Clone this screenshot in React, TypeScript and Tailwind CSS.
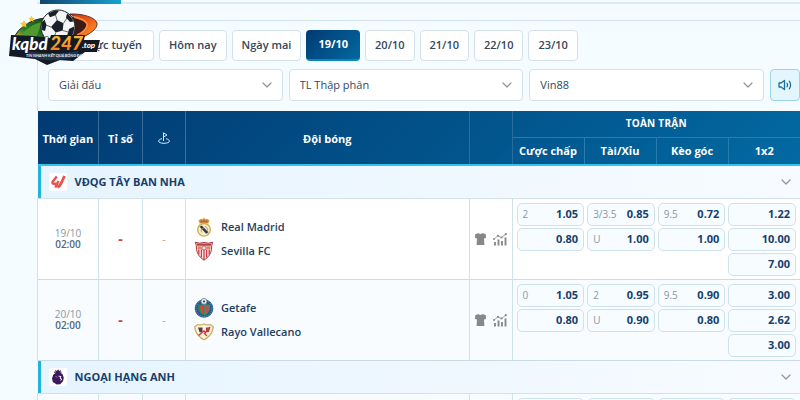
import { ChevronDown } from "lucide-react";

const days = ["Hôm nay", "Ngày mai", "19/10", "20/10", "21/10", "22/10", "23/10"];

const filters = [
  { id: "league", label: "Giải đấu" },
  { id: "odds-type", label: "TL Thập phân" },
  { id: "bookmaker", label: "Vin88" },
];

type Odd = { line?: string; value: string };

type Match = {
  date: string;
  time: string;
  home: string;
  away: string;
  HomeCrest: () => React.ReactNode;
  AwayCrest: () => React.ReactNode;
  // one column per market: handicap, over/under, corners, 1x2
  odds: Odd[][];
};

const laLiga: Match[] = [
  {
    date: "19/10",
    time: "02:00",
    home: "Real Madrid",
    away: "Sevilla FC",
    HomeCrest: RealMadridCrest,
    AwayCrest: SevillaCrest,
    odds: [
      [{ line: "2", value: "1.05" }, { value: "0.80" }],
      [{ line: "3/3.5", value: "0.85" }, { line: "U", value: "1.00" }],
      [{ line: "9.5", value: "0.72" }, { value: "1.00" }],
      [{ value: "1.22" }, { value: "10.00" }, { value: "7.00" }],
    ],
  },
  {
    date: "20/10",
    time: "02:00",
    home: "Getafe",
    away: "Rayo Vallecano",
    HomeCrest: GetafeCrest,
    AwayCrest: RayoCrest,
    odds: [
      [{ line: "0", value: "1.05" }, { value: "0.80" }],
      [{ line: "2", value: "0.95" }, { line: "U", value: "0.90" }],
      [{ line: "9.5", value: "0.90" }, { value: "0.80" }],
      [{ value: "3.00" }, { value: "2.62" }, { value: "3.00" }],
    ],
  },
];

export default function App() {
  return (
    <div className="h-screen overflow-hidden bg-[#f4fcff] font-['Open_Sans','Noto_Sans',sans-serif] text-[11px] text-[#33475b]">
      <SiteLogo />
      <main className="pl-[37px]">
        <div className="h-1 border-b-2 border-[#dde9f0]">
          <div className="ml-[3px] h-1 w-[81px] bg-linear-to-r from-[#11466f] to-[#16a3d3]" />
        </div>
        <Filters />
        <OddsTable />
      </main>
    </div>
  );
}

function Filters() {
  return (
    <section className="mt-4 flex flex-col gap-2 border-t border-l border-[#d3e1ea] pt-[9px] pb-[10px] pl-[10px]">
      <div className="flex gap-[5px]">
        <button className="h-[31px] w-[106px] rounded border border-[#d5e1ea] bg-white pr-[11px] text-right font-semibold">
          Trực tuyến
        </button>
        {days.map((day) => (
          <button
            key={day}
            className={
              day === "19/10"
                ? "h-[31px] rounded border-b-2 border-[#0a86b8] bg-linear-135 from-[#023a72] to-[#0369a1] px-3 font-bold text-white"
                : "h-[31px] rounded border border-[#d5e1ea] bg-white px-[9px] font-semibold"
            }
          >
            {day}
          </button>
        ))}
      </div>
      <div className="flex gap-[6px]">
        {filters.map((f) => (
          <div key={f.id} className="relative flex-1">
            <select
              id={f.id}
              aria-label={f.label}
              className="h-8 w-full appearance-none rounded border border-[#d5e1ea] bg-white pl-[10px] font-medium"
            >
              <option>{f.label}</option>
            </select>
            <ChevronDown className="pointer-events-none absolute top-2 right-2 size-4 text-[#8b959c]" strokeWidth={1.8} />
          </div>
        ))}
        <button
          aria-label="Âm thanh"
          className="flex h-8 w-[30px] items-center justify-center rounded border border-[#9bd3e8] bg-[#e3f6fe]"
        >
          <SoundIcon />
        </button>
      </div>
    </section>
  );
}

function OddsTable() {
  return (
    <table className="w-full table-fixed border-collapse">
      <colgroup>
        <col className="w-[61px]" />
        <col className="w-11" />
        <col className="w-[43px]" />
        <col />
        <col className="w-[43px]" />
        <col className="w-[72px]" />
        <col className="w-[72px]" />
        <col className="w-[72px]" />
        <col className="w-[72px]" />
      </colgroup>
      <thead className="border-b-2 border-[#35c3ea] bg-linear-135 from-[#023a72] to-[#0369a1] text-white">
        <tr className="h-[26px]">
          <th rowSpan={2} className="border-r border-[#3c6c98] pt-1">Thời gian</th>
          <th rowSpan={2} className="border-r border-[#3c6c98] pt-1">Tỉ số</th>
          <th rowSpan={2} className="border-r border-[#3c6c98]">
            <CornerIcon />
          </th>
          <th rowSpan={2} className="border-r border-[#2b6d9f] pt-1">Đội bóng</th>
          <th rowSpan={2} className="border-r border-[#2b6d9f]" />
          <th colSpan={4} className="border-b border-[#2b7cae] text-[10px] tracking-wide">TOÀN TRẬN</th>
        </tr>
        <tr className="h-7">
          <th className="border-r border-[#2b7cae]">Cược chấp</th>
          <th className="border-r border-[#2b7cae]">Tài/Xỉu</th>
          <th className="border-r border-[#2b7cae]">Kèo góc</th>
          <th>1x2</th>
        </tr>
      </thead>
      <tbody>
        <LeagueRow name="VĐQG TÂY BAN NHA" logo={<LaLigaLogo />} />
        {laLiga.map((m) => (
          <MatchRow key={m.home} match={m} />
        ))}
        <LeagueRow name="NGOẠI HẠNG ANH" logo={<PremierLeagueLogo />} />
        <MatchRow match={laLiga[0]} />
      </tbody>
    </table>
  );
}

function LeagueRow({ name, logo }: { name: string; logo: React.ReactNode }) {
  return (
    <tr>
      <td colSpan={9} className="border-b border-[#d3e1ea] p-0">
        <div className="flex h-8 items-center border-l-3 border-[#22b4d8] bg-linear-to-r from-[#e6f4ff] to-[#f7fbff] pr-[6px] pl-2">
          <span className="flex size-[18px] items-center justify-center rounded-xs bg-white">{logo}</span>
          <h2 className="ml-2 flex-1 font-bold text-[#173f6b]">{name}</h2>
          <button aria-label={name}>
            <ChevronDown className="size-4 text-[#8b959c]" strokeWidth={1.8} />
          </button>
        </div>
      </td>
    </tr>
  );
}

function MatchRow({ match }: { match: Match }) {
  const { HomeCrest, AwayCrest } = match;
  return (
    <tr className="border-b border-[#c9dce6] even:bg-white odd:bg-[#f8fcff]">
      <td className="border-x border-[#d0e2ea] text-center text-[10px] leading-[11px]">
        <div className="text-[#8b979f]">{match.date}</div>
        <div className="font-semibold text-[#52667a]">{match.time}</div>
      </td>
      <td className="border-r border-[#d0e2ea] text-center text-sm font-bold text-[#d63a4c]">-</td>
      <td className="border-r border-[#d0e2ea] text-center text-[#d98e8e]">-</td>
      <td className="border-r border-[#d0e2ea] pl-2">
        <div className="flex flex-col gap-1 font-semibold text-[#1f3f60]">
          <div className="flex h-5 items-center gap-[7px]">
            <HomeCrest />
            {match.home}
          </div>
          <div className="flex h-5 items-center gap-[7px]">
            <AwayCrest />
            {match.away}
          </div>
        </div>
      </td>
      <td className="border-r border-[#d0e2ea]">
        <div className="flex items-center justify-center gap-[7px] text-[#85898c]">
          <ShirtIcon />
          <StatsIcon />
        </div>
      </td>
      <td colSpan={4} className="px-1 pt-1 pb-[3px] align-top">
        <div className="grid grid-cols-4 gap-[3px]">
          {match.odds.map((market, i) => (
            <div key={i} className="flex flex-col gap-[2px]">
              {market.map((odd, j) => (
                <button
                  key={j}
                  className="flex h-[23px] items-center justify-between rounded-[5px] border border-[#cfe2ec] bg-[#f6fcff] pr-[5px] pl-[5px]"
                >
                  <span className="text-[10px] text-[#8b979f]">{odd.line}</span>
                  <span className="font-bold text-[#173f6b]">{odd.value}</span>
                </button>
              ))}
            </div>
          ))}
        </div>
      </td>
    </tr>
  );
}

function SoundIcon() {
  return (
    <svg viewBox="0 0 14 12" className="h-3 w-[14px]" fill="none" stroke="#1c6f96" strokeWidth="1.300" strokeLinejoin="round" strokeLinecap="round">
      <path d="M1 4v4h2l3.500 2.500v-9L3 4z" />
      <path d="M9 4.200c.7 1 .7 2.600 0 3.600M11.300 2.200c1.700 2 1.700 5.600 0 7.600" />
    </svg>
  );
}

function CornerIcon() {
  return (
    <svg viewBox="0 0 12 12" className="mx-auto size-3" fill="none" stroke="#d6e8f5" strokeWidth="1">
      <path d="M5.500 9V.8L9 3 5.500 5" />
      <path d="M4 6.800C2 7 .6 7.800.6 9c0 1.400 2.400 2.300 5.400 2.300s5.400-.9 5.400-2.300C11.400 7.800 10 7 8 6.800" />
    </svg>
  );
}

function ShirtIcon() {
  return (
    <svg viewBox="0 0 11 12" className="h-3 w-[11px]" fill="currentColor">
      <path d="M3.400 0 .2 1.300 0 5l2 .4L1.600 12h7.800L9 5.400l2-.4-.2-3.700L7.600 0C7 1.200 4 1.200 3.400 0z" />
    </svg>
  );
}

function StatsIcon() {
  return (
    <svg viewBox="0 0 14 13" className="h-[13px] w-[14px]" fill="none" stroke="currentColor">
      <path d="M2 12.500V9M5.500 12.500v-6M9 12.500V8M12.500 12.500V4.500" strokeWidth="1.900" />
      <path d="M.8 6.200 5 2.800l3.500 1.700L13 1" strokeWidth=".8" />
      <g fill="currentColor" stroke="none">
        <circle cx="1" cy="6" r="1" />
        <circle cx="5" cy="2.800" r="1.100" />
        <circle cx="8.500" cy="4.500" r="1.100" />
        <circle cx="12.800" cy="1.200" r="1.100" />
      </g>
    </svg>
  );
}

function LaLigaLogo() {
  return (
    <svg viewBox="0 0 16 14" className="h-[14px] w-4" fill="none" stroke="#e5524f" strokeLinejoin="round">
      <path d="M6.800 1.500 2.600 6.800q-.8 2 1.600 2h2" strokeWidth="2.400" />
      <path d="m8.500 6-3.200 6.500" strokeWidth="2.400" />
      <path d="M14.500 1 11 8.500q-1 2-3.500 4" strokeWidth="2.800" />
    </svg>
  );
}

function PremierLeagueLogo() {
  return (
    <svg viewBox="0 0 14 16" className="h-4 w-[14px]">
      <path d="M4.200.8 5.800 2 7.200.2 8.200 2 10 1 9.400 3.800l2.200 1.400 1.200 3.600-.8 3.400-2.800 3-3.400.2-4-2.400L1 9.600l1.200-3.800L4.600 4z" fill="#3d195b" />
      <path d="M3 3l1.800 1M10.500 3.200 9 4.500" stroke="#3d195b" />
      <path d="M7.600 7.200 10 7.500 9 9.200l2 1.200-1.600 1M5 7.500l.8.8" stroke="#fff" strokeWidth=".9" fill="none" />
    </svg>
  );
}

function RealMadridCrest() {
  return (
    <svg viewBox="0 0 20 20" className="size-5">
      <path d="M5.600 6.500 4.300 3.500 7 1.800 9 2l1-1.800L11 2l2-.2 2.700 1.700-1.300 3z" fill="#d7a544" />
      <path d="M6.500 3.500h2v2h-2zM11.500 3.500h2v2h-2zM9.300 2.800h1.400v2.600H9.300z" fill="#b04a3a" />
      <circle cx="10" cy="12.800" r="6.300" fill="#f3efd0" stroke="#cfb04c" strokeWidth="1.400" />
      <path d="M5.500 9.800 7.800 8.500l6.700 6.800-2.300 1.500z" fill="#2c3c58" />
      <path d="M8 15.500c-1.800-2 0-4.800 2.300-4.500M11 9.500c2 .5 3 2.500 2 4.500" stroke="#bd9a3c" fill="none" />
    </svg>
  );
}

function SevillaCrest() {
  return (
    <svg viewBox="0 0 20 20" className="size-5">
      <path d="M1.200 1.200Q5.500 3 10 1.500 14.500 3 18.800 1.200 17.300 4 17.500 8 17 14.500 10 19.300 3 14.500 2.500 8 2.700 4 1.200 1.200z" fill="#fbf3f1" stroke="#ab3640" />
      <path d="M4.800 8.500v5.200M7.400 8.500v8M10 8.500V19M12.600 8.500v8M15.200 8.500v5.200" stroke="#cb3440" strokeWidth="1.300" />
      <path d="M2.400 2.600h15.200L17 4.800H3z" fill="#b8414a" />
      <path d="M3.500 5.200h4v3h-4zM12.500 5.200h4v3h-4z" fill="#d98a5b" />
      <circle cx="10" cy="7" r="2.100" fill="#f5e3dc" stroke="#b8414a" strokeWidth=".8" />
    </svg>
  );
}

function GetafeCrest() {
  return (
    <svg viewBox="0 0 20 20" className="size-5">
      <circle cx="10" cy="10.500" r="9.300" fill="#24598c" />
      <circle cx="10" cy="10.500" r="8" fill="none" stroke="#7fa5c4" strokeWidth=".8" strokeDasharray="1.200 1" />
      <path d="M4 6.500h6v11q-5.300-1.600-6-6.500z" fill="#2f7f68" />
      <path d="M10 6.500h6V11q-.9 4.800-6 6.500z" fill="#3b906a" />
      <path d="M6 8.500 9.300 7v9L6.800 14.500zM11.500 8l3.300.6-.6 5.400-2.400 1.400z" fill="#d0493a" />
      <circle cx="10" cy="3.400" r="3" fill="#eef3f5" stroke="#4d6478" strokeWidth=".7" />
      <path d="m10 2.200 1.200.9-.5 1.300H9.300l-.5-1.300z" fill="#34495c" />
    </svg>
  );
}

function RayoCrest() {
  return (
    <svg viewBox="0 0 20 20" className="size-5">
      <path d="M.8 4.500Q2.500 4 3.500 2.500 7 3.500 10 2q3 1.500 6.500.5 1 1.500 2.700 2Q19 7 18.500 8.500 16.500 14.500 10 17.800 3.500 14.500 1.500 8.500 1 7 .8 4.500z" fill="#fbf3dc" stroke="#c7ab5c" strokeWidth="1.200" />
      <path d="M4 5.500h4.500v4.800H5.500z" fill="#5e3a42" />
      <path d="M12 5.500h4.200L15 10l-3 .3z" fill="#b03a3c" />
      <path d="M4.500 13.500 10 9l1.500 1.500L16 5M10 11l3 3" stroke="#cf3a40" strokeWidth="1.400" fill="none" />
    </svg>
  );
}

function SiteLogo() {
  return (
    <svg viewBox="0 0 98 58" className="absolute top-2 left-[6px] h-[58px] w-[98px]" role="img" aria-label="kqbd247.top">
      <defs>
        <linearGradient id="green" x1="0" y1="1" x2="1" y2="0">
          <stop offset="0" stopColor="#e2b33a" />
          <stop offset=".35" stopColor="#2f7d2c" />
          <stop offset="1" stopColor="#174a1b" />
        </linearGradient>
        <linearGradient id="flame" x1="0" y1="0" x2="1" y2="1">
          <stop offset="0" stopColor="#c92a10" />
          <stop offset=".55" stopColor="#f4621a" />
          <stop offset="1" stopColor="#fbb52c" />
        </linearGradient>
        <linearGradient id="gold" x1="0" y1="0" x2="0" y2="1">
          <stop offset="0" stopColor="#ffcf3a" />
          <stop offset="1" stopColor="#f2701a" />
        </linearGradient>
      </defs>
      <path d="M8 30C12 20 24 11 40 10l-2 20z" fill="url(#green)" stroke="#1b2a1c" />
      <path d="M14 29c5-8 13-13 22-15l-6 16z" fill="#4f9a2c" />
      <path d="M64 6c12-.5 25 3 27 9 1 6-8 12-19 16l-6-2c9-4 14-9 13-12-1-4-8-7-15-11z" fill="url(#flame)" stroke="#3c1710" strokeWidth=".8" />
      <path d="M64 8c9 2 16 5 17 9s-5 9-11 12l-6-1z" fill="#3a1a14" />
      <path d="M68 9c9 2 14 5 13 9s-5 7-10 9" stroke="#ff8a3c" strokeWidth="1.800" fill="none" />
      <path d="m18 12 1.200 2.600 2.800.3-2.100 1.900.6 2.800-2.500-1.400-2.500 1.400.6-2.800-2.100-1.900 2.800-.3zM25.500 7.500l1 2.200 2.300.2-1.700 1.600.5 2.400-2.100-1.200-2.100 1.200.5-2.400-1.700-1.600 2.300-.2z" fill="#f4c542" />
      <circle cx="52" cy="19" r="17" fill="#f4f5f6" stroke="#1c242c" />
      <g fill="#1a2027">
        <path d="m51 12 6.500 3.200-.8 7.300-7 2-4.700-5.500z" />
        <path d="M42 5.500 49 2.600l4 .2-3.500 4.400-5.500 2zM61 5.500c3 2 5 4.500 6.500 8L64 14l-4-4.500zM35.500 15l3-3.500 2 5.500-1.500 6-3.200-1zM63 21l5-2.500c.3 4-.5 7-2.500 9.500H61z" />
      </g>
      <path d="m51 12-1.500-5M57.500 15.200 61 10M56.700 22.500 62 24M45 19l-5-2M49.700 24.500 48 30" stroke="#3a424a" strokeWidth=".8" />
      <path d="M5 27 28 28 44 30 45 27h34l-1 5h16l-3 12H79L67 53 54 52 41 57 29 51 3 48z" fill="#131a24" />
      <path d="M21 43q26 5 51 0l1 5q-18 5-32 4-9 0-16-3z" fill="#20344f" />
      <g fontFamily="Lato, Noto Sans, sans-serif" fontStyle="italic" fontWeight="900" stroke="#131a24" strokeWidth="1" paintOrder="stroke">
        <text x="6" y="42" fontSize="17" fill="#fff">kqbd</text>
        <text x="44" y="42" fontSize="19" fill="url(#gold)">247</text>
        <text x="76" y="40" fontSize="8" fill="#fff">.top</text>
      </g>
      <text x="20" y="49" fontFamily="Lato, Noto Sans, sans-serif" fontStyle="italic" fontWeight="700" fontSize="4" fill="#e8edf2">
        TIN NHANH KẾT QUẢ BÓNG ĐÁ
      </text>
    </svg>
  );
}
